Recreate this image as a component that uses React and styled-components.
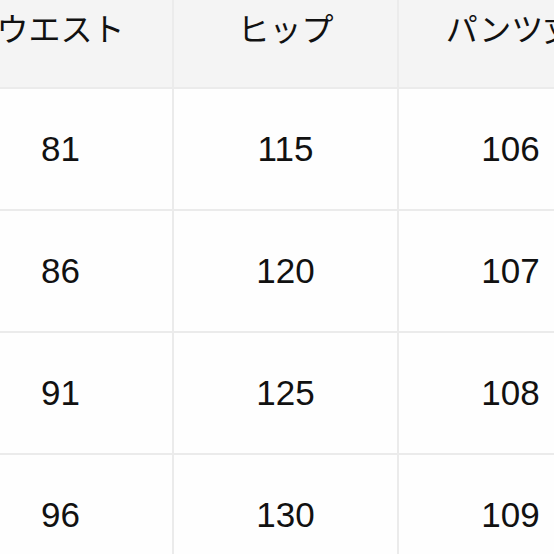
import React from 'react';
import styled, {createGlobalStyle} from 'styled-components';

const GlobalStyle = createGlobalStyle`
    html, body {
        margin: 0;
        padding: 0;
        background: #fefefe;
    }
`;

const headers = ['ウエスト', 'ヒップ', 'パンツ丈'];
const rows = [
    [81, 115, 106],
    [86, 120, 107],
    [91, 125, 108],
    [96, 130, 109],
];

const Viewport = styled.div`
    width: 554px;
    height: 554px;
    overflow: hidden;
    background: #fefefe;
`;

const Table = styled.div`
    display: grid;
    grid-template-columns: repeat(3, 223px);
    grid-auto-rows: 120px;
    gap: 2px;
    background: #ebebeb;
    width: max-content;
    margin-left: -51px;
    margin-top: -33px;
`;

const Cell = styled.div`
    display: flex;
    align-items: center;
    justify-content: center;
    background: ${props => props.$head ? '#f4f4f4' : '#fefefe'};
    color: #111;
    font-family: ${props => props.$head
        ? '"Noto Sans CJK JP", "Noto Sans", sans-serif'
        : '"Liberation Sans", Arial, sans-serif'};
    font-size: ${props => props.$head ? '32px' : '35px'};
    font-weight: 400;
    white-space: nowrap;
`;

const App = () => {
    return (
        <>
            <GlobalStyle />
            <Viewport>
                <Table>
                    {headers.map(h => (
                        <Cell key={h} $head>{h}</Cell>
                    ))}
                    {rows.map((row, i) => row.map((value, j) => (
                        <Cell key={`${i}-${j}`}>{value}</Cell>
                    )))}
                </Table>
            </Viewport>
        </>
    );
};

export default App;
